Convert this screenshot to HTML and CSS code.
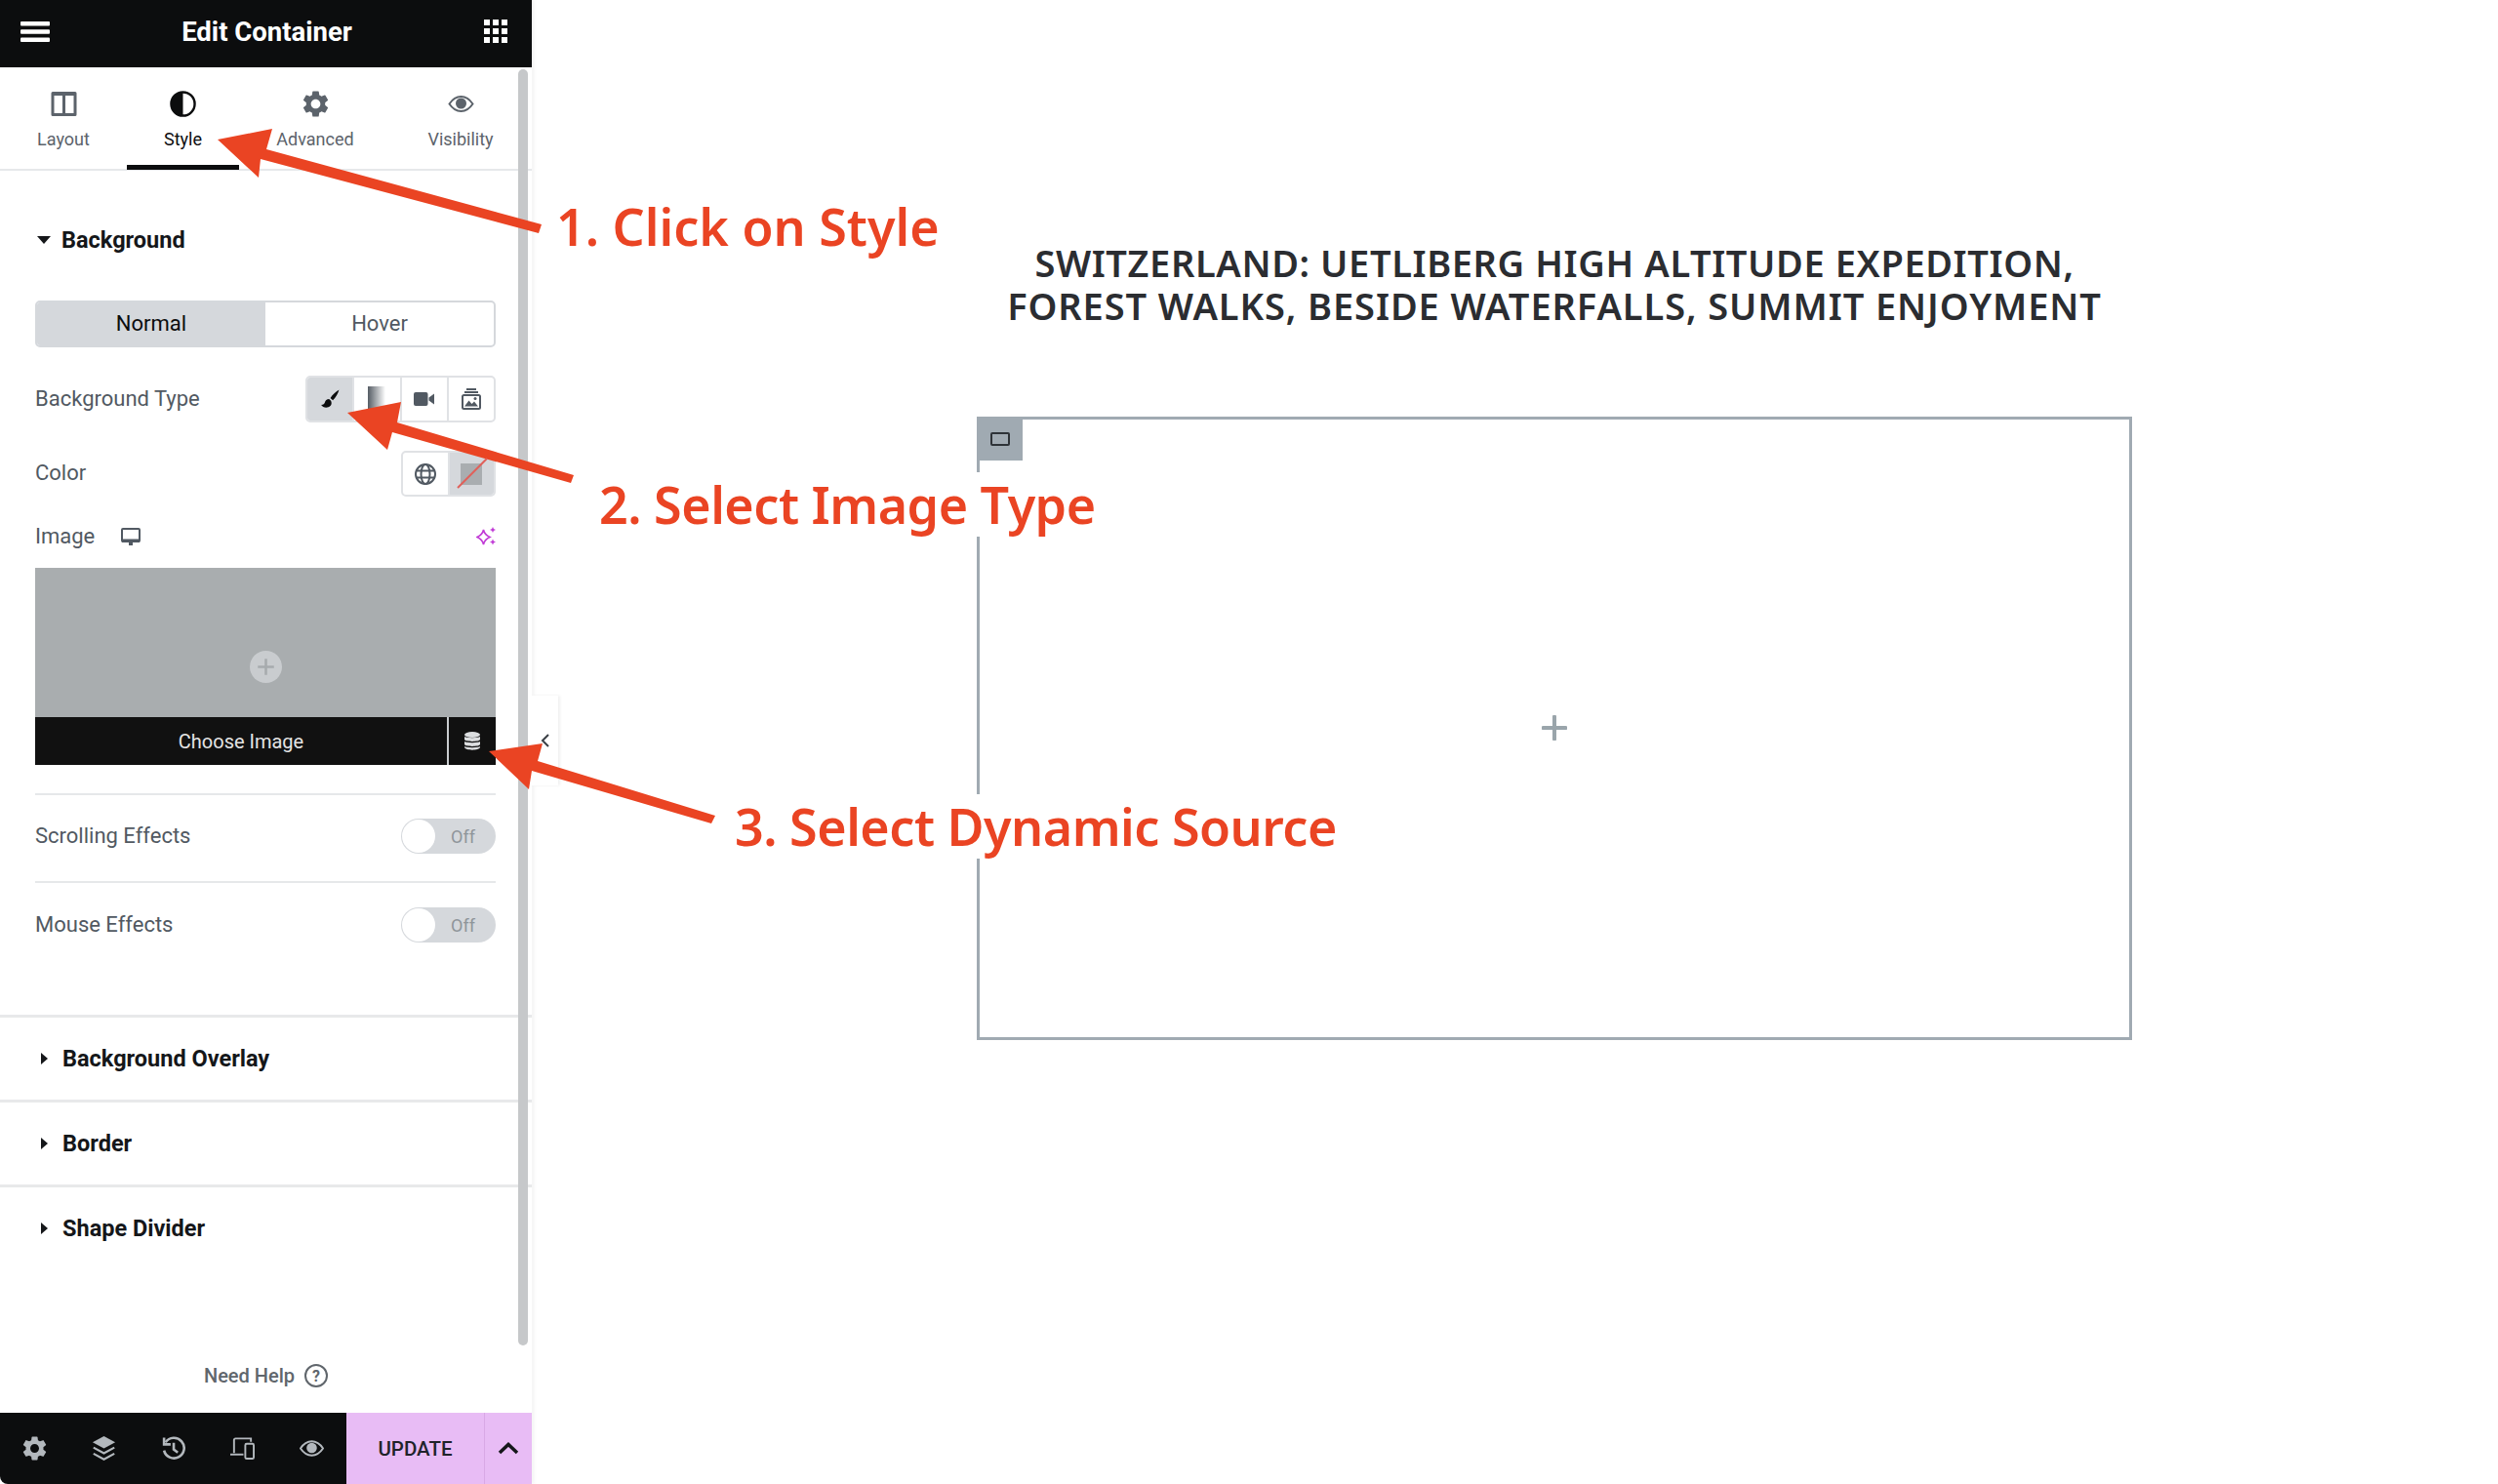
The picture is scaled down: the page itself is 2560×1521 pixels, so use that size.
FILE: index.html
```html
<!DOCTYPE html>
<html lang="en">
<head>
  <meta charset="UTF-8" />
  <title>Edit Container</title>
  <link rel="stylesheet" href="styles.css">
</head>
<body>
<div class="editor">

  <aside class="panel">
    <header class="panel-head">
      <svg class="icon-menu" viewBox="0 0 30 21"><rect width="30" height="4.500" rx="1"/><rect y="8.200" width="30" height="4.500" rx="1"/><rect y="16.500" width="30" height="4.500" rx="1"/></svg>
      <h2>Edit Container</h2>
      <svg class="icon-grid" viewBox="0 0 24 24"><path d="M0 0h6v6H0zM9 0h6v6H9zM18 0h6v6h-6zM0 9h6v6H0zM9 9h6v6H9zM18 9h6v6h-6zM0 18h6v6H0zM9 18h6v6H9zM18 18h6v6h-6z"/></svg>
    </header>

    <nav class="tabs">
      <a class="tab tab-layout">
        <svg viewBox="0 0 27 27"><path d="M2 1h23a1.500 1.500 0 0 1 1.500 1.500v22A1.500 1.500 0 0 1 25 26H2a1.500 1.500 0 0 1-1.500-1.500v-22A1.500 1.500 0 0 1 2 1zm1.500 4v18H12V5zm11.500 0v18h8.500V5z" fill-rule="evenodd"/></svg>
        <span>Layout</span>
      </a>
      <a class="tab tab-style active">
        <svg viewBox="0 0 28 28"><circle class="half-ring" cx="14" cy="14" r="12.500"/><path d="M14 1.500a12.500 12.500 0 0 0 0 25z"/></svg>
        <span>Style</span>
      </a>
      <a class="tab tab-advanced">
        <svg viewBox="2 2 20 20"><path d="M19.140 12.940c.04-.3.06-.61.06-.94 0-.32-.02-.64-.07-.94l2.030-1.580a.49.49 0 0 0 .12-.61l-1.920-3.320a.488.488 0 0 0-.59-.22l-2.390.96c-.5-.38-1.030-.7-1.620-.94l-.36-2.540a.484.484 0 0 0-.48-.41h-3.840c-.24 0-.43.17-.47.41l-.36 2.540c-.59.24-1.130.57-1.620.94l-2.390-.96c-.22-.08-.47 0-.59.22L2.740 8.870c-.12.21-.08.47.12.61l2.030 1.580c-.05.3-.09.63-.09.94s.02.64.07.94l-2.030 1.580a.49.49 0 0 0-.12.61l1.920 3.320c.12.22.37.29.59.22l2.390-.96c.5.38 1.030.7 1.620.94l.36 2.540c.05.24.24.41.48.41h3.840c.24 0 .44-.17.47-.41l.36-2.540c.59-.24 1.130-.56 1.620-.94l2.390.96c.22.08.47 0 .59-.22l1.920-3.320c.12-.22.07-.47-.12-.61l-2.010-1.580zM12 15.600c-1.980 0-3.600-1.620-3.600-3.600s1.620-3.600 3.600-3.600 3.600 1.620 3.600 3.600-1.620 3.600-3.600 3.600z"/></svg>
        <span>Advanced</span>
      </a>
      <a class="tab tab-visibility">
        <svg viewBox="0 0 26 17"><path class="line" d="M1 8.500C5 2.500 9 1 13 1s8 1.500 12 7.500C21 14.500 17 16 13 16S5 14.500 1 8.500z"/><circle cx="13" cy="8" r="5.500"/></svg>
        <span>Visibility</span>
      </a>
    </nav>

    <section class="section-open">
      <h3 class="section-title"><i class="caret-down"></i>Background</h3>
      <div class="section-body">
        <div class="state-switch">
          <span class="state active">Normal</span>
          <span class="state">Hover</span>
        </div>

        <div class="row row-type">
          <label>Background Type</label>
          <div class="btn-group">
            <span class="cell selected">
              <svg class="ico-brush" viewBox="0 0 18 18"><path d="M17.500.5c-2.500 1.200-6 4.500-8 7.500l2.300 2.200c2.500-2.500 5-6.500 5.700-9.700zM8.300 9C6.200 9 4.800 10.300 4.500 12c-.3 1.500-1.500 2.300-3.500 2.500 1.500 2.500 6 3.300 8.500.8 1.300-1.300 1.300-3.300.5-4.800z"/></svg>
            </span>
            <span class="cell"><i class="swatch-gradient"></i></span>
            <span class="cell">
              <svg class="ico-video" viewBox="0 0 21 14"><rect width="14.500" height="14" rx="2"/><path d="M15.500 5.500 21 1.500v11l-5.500-4z"/></svg>
            </span>
            <span class="cell">
              <svg class="ico-slides" viewBox="0 0 20 22"><path class="line" d="M5 1h10M3 4h14"/><rect class="line" x="1" y="7" width="18" height="14" rx="1.500"/><path d="M3 18.500l4.500-6 3 3.500 2.500-2.500 4 5z"/><circle cx="14" cy="10.500" r="1.500"/></svg>
            </span>
          </div>
        </div>

        <div class="row row-color">
          <label>Color</label>
          <div class="btn-group">
            <span class="cell">
              <svg class="ico-globe" viewBox="0 0 22 22"><circle class="line" cx="11" cy="11" r="10"/><ellipse class="line" cx="11" cy="11" rx="4.500" ry="10"/><path class="line" d="M1.500 7.500h19M1.500 14.500h19"/></svg>
            </span>
            <span class="cell selected"><i class="swatch-none"></i></span>
          </div>
        </div>

        <div class="row row-image">
          <label>Image</label>
          <svg class="ico-monitor" viewBox="0 0 20 18"><path class="line" d="M2 1h16a1 1 0 0 1 1 1v11a1 1 0 0 1-1 1H2a1 1 0 0 1-1-1V2a1 1 0 0 1 1-1z"/><path d="M1 11.500h18V15H1zM8 15h4v3H8z"/></svg>
          <svg class="ico-sparkle" viewBox="0 0 20 20"><path class="line-thin" d="M7.500 3c.8 4 2.500 5.700 6.500 7.500-4 1.800-5.700 3.500-6.500 7.500-.8-4-2.500-5.700-6.500-7.500 4-1.800 5.700-3.500 6.500-7.500z"/><path d="M17 0l.9 2.100 2.100.9-2.100.9-.9 2.100-.9-2.100-2.100-.9 2.100-.9zM17 12.500l.9 2.100 2.100.9-2.100.9-.9 2.100-.9-2.100-2.100-.9 2.100-.9z"/></svg>
        </div>

        <div class="media-box">
          <div class="media-preview">
            <svg class="ico-add" viewBox="0 0 32 32"><circle class="add-disc" cx="16" cy="16" r="16"/><path class="add-cross" d="M16 8v16M8 16h16"/></svg>
          </div>
          <div class="media-actions">
            <span class="media-choose">Choose Image</span>
            <span class="media-dynamic">
              <svg viewBox="0 0 16 19"><ellipse cx="8" cy="3" rx="8" ry="3"/><path d="M0 5c1.500 1.500 14.500 1.500 16 0v3c-1 2.500-15 2.500-16 0zM0 10c1.500 1.500 14.500 1.500 16 0v3c-1 2.500-15 2.500-16 0zM0 15c1.500 1.500 14.500 1.500 16 0v1c-1 3.500-15 3.500-16 0z"/></svg>
            </span>
          </div>
        </div>

        <div class="row row-toggle">
          <label>Scrolling Effects</label>
          <span class="toggle"><i></i>Off</span>
        </div>
        <div class="row row-toggle">
          <label>Mouse Effects</label>
          <span class="toggle"><i></i>Off</span>
        </div>
      </div>
    </section>

    <section class="section-closed"><h3 class="section-title"><i class="caret-right"></i>Background Overlay</h3></section>
    <section class="section-closed"><h3 class="section-title"><i class="caret-right"></i>Border</h3></section>
    <section class="section-closed"><h3 class="section-title"><i class="caret-right"></i>Shape Divider</h3></section>

    <div class="need-help">
      Need Help
      <svg viewBox="0 0 24 24"><circle class="line" cx="12" cy="12" r="11"/><text x="12" y="17.500" text-anchor="middle" class="help-mark">?</text></svg>
    </div>

    <footer class="panel-foot">
      <div class="foot-tools">
        <svg viewBox="2 2 20 20"><path d="M19.140 12.940c.04-.3.06-.61.06-.94 0-.32-.02-.64-.07-.94l2.030-1.580a.49.49 0 0 0 .12-.61l-1.920-3.320a.488.488 0 0 0-.59-.22l-2.390.96c-.5-.38-1.030-.7-1.620-.94l-.36-2.540a.484.484 0 0 0-.48-.41h-3.840c-.24 0-.43.17-.47.41l-.36 2.540c-.59.24-1.130.57-1.620.94l-2.390-.96c-.22-.08-.47 0-.59.22L2.740 8.870c-.12.21-.08.47.12.61l2.030 1.580c-.05.3-.09.63-.09.94s.02.64.07.94l-2.030 1.580a.49.49 0 0 0-.12.61l1.920 3.320c.12.22.37.29.59.22l2.390-.96c.5.38 1.030.7 1.620.94l.36 2.540c.05.24.24.41.48.41h3.840c.24 0 .44-.17.47-.41l.36-2.540c.59-.24 1.130-.56 1.620-.94l2.390.96c.22.08.47 0 .59-.22l1.920-3.320c.12-.22.07-.47-.12-.61l-2.010-1.580zM12 15.600c-1.980 0-3.600-1.620-3.600-3.600s1.620-3.600 3.600-3.600 3.600 1.620 3.600 3.600-1.620 3.600-3.600 3.600z"/></svg>
        <svg viewBox="0 0 26 28"><path d="M13 0l13 7-13 7L0 7z"/><path class="line-thick" d="M1 13l12 6.500L25 13M1 20l12 6.500L25 20"/></svg>
        <svg viewBox="0 0 24 24"><path class="line-thick" d="M4.500 6A10 10 0 1 1 3 14"/><path class="line-thick" d="M3 1.500V8h6.500"/><path class="line-thick" d="M12.500 6.500V13l4 3"/></svg>
        <svg viewBox="0 0 26 24"><path class="line" d="M4 17V3a1.500 1.500 0 0 1 1.500-1.500H22V5"/><path class="line" d="M0 18.500h14"/><rect class="line" x="16" y="7" width="9" height="16" rx="1.500"/></svg>
        <svg viewBox="0 0 26 17"><path class="line" d="M1 8.500C5 2.500 9 1 13 1s8 1.500 12 7.500C21 14.500 17 16 13 16S5 14.500 1 8.500z"/><circle cx="13" cy="8" r="5.500"/></svg>
      </div>
      <div class="foot-update">UPDATE</div>
      <div class="foot-more">
        <svg viewBox="0 0 22 13"><path class="chevron" d="M2 11l9-8.500 9 8.500"/></svg>
      </div>
    </footer>

    <div class="scrollbar"></div>
    <div class="collapse-tab"><svg viewBox="0 0 10 16"><path class="line" d="M8 2L2 8l6 6"/></svg></div>
  </aside>

  <main class="canvas">
    <h1><span class="title-top">SWITZERLAND: UETLIBERG HIGH ALTITUDE EXPEDITION,</span><br>FOREST WALKS, BESIDE WATERFALLS, SUMMIT ENJOYMENT</h1>
    <div class="container-box">
      <span class="container-tab"><i></i></span>
      <svg class="ico-plus" viewBox="0 0 26 26"><path class="plus-stroke" d="M13 1.500v23M1.500 13h23"/></svg>
    </div>
  </main>

  <!-- tutorial annotations painted over the screenshot -->
  <div class="note note-1">1. Click on Style</div>
  <div class="note note-2">2. Select Image Type</div>
  <div class="note note-3">3. Select Dynamic Source</div>
  <svg class="arrows" viewBox="0 0 2560 1521">
    <polygon points="223,143 279,132 273,153 555,230 552,239 267,163 265,182"/>
    <polygon points="356,423 411,412 407,433 588,487 585,495 402,443 397,461"/>
    <polygon points="501,770 556,762 551,780 733,836 729,844 545,790 542,809"/>
    <path class="slash" d="M469 500L499 470"/>
  </svg>
</div>
</body>
</html>
```

FILE: styles.css
```css
* {
  box-sizing: border-box;
}

body {
  margin: 0;
  background-color: #fff;
  font-family: Roboto, "Liberation Sans", sans-serif;
  color: #515962;
}

svg {
  display: block;
  fill: currentColor;
}

/* stroked parts of the icons */
.line,
.line-thin,
.line-thick,
.chevron {
  fill: none;
  stroke: currentColor;
  stroke-width: 2;
}

.line-thin {
  stroke-width: 1.600;
}

.line-thick {
  stroke-width: 2.500;
}

.chevron {
  stroke-width: 3.500;
}

.half-ring {
  fill: #fff;
  stroke: #0c0d0e;
  stroke-width: 2.500;
}

.add-disc {
  fill: #c9cccf;
}

.add-cross {
  fill: none;
  stroke: #a7abae;
  stroke-width: 2.500;
}

.plus-stroke {
  fill: none;
  stroke: currentColor;
  stroke-width: 4;
  stroke-linecap: round;
}

.editor {
  position: relative;
  display: flex;
  width: 2560px;
  height: 1521px;
  overflow: hidden;
}

/* side panel */
.panel {
  position: relative;
  display: flex;
  flex-direction: column;
  width: 545px;
  height: 1521px;
  flex-shrink: 0;
  box-shadow: 3px 0 3px #f6f6f6;
}

.panel-head {
  display: flex;
  align-items: center;
  justify-content: space-between;
  height: 69px;
  padding: 0 25px 5px 21px;
  background-color: #0c0d0e;
  color: #fff;
}

.panel-head h2 {
  margin: 0;
  font-size: 27.500px;
  font-weight: 700;
}

.icon-menu {
  width: 30px;
  height: 21px;
}

.icon-grid {
  width: 24px;
  height: 24px;
}

.tabs {
  position: relative;
  height: 106px;
  border-bottom: 2px solid #e6e8ea;
}

.tab {
  position: absolute;
  top: 0;
  display: flex;
  flex-direction: column;
  align-items: center;
  width: 116px;
  height: 105px;
  padding-top: 24px;
  font-size: 18px;
  color: #5c636b;
}

.tab svg {
  height: 27px;
  width: 27px;
}

.tab span {
  margin-top: 12px;
}

.tab-layout { left: 7px; }
.tab-style { left: 130px; width: 115px; }
.tab-advanced { left: 265px; }
.tab-visibility { left: 414px; }

.tab-style {
  border-bottom: 5px solid #0c0d0e;
  color: #0c0d0e;
}

.tab-visibility svg {
  height: 17px;
  margin: 5px 0;
}

.section-title {
  display: flex;
  align-items: center;
  margin: 0;
  padding-left: 42px;
  font-size: 23.500px;
  font-weight: 700;
  color: #15171a;
}

.section-open .section-title {
  height: 86px;
  margin-top: 28px;
  padding-left: 38px;
}

.caret-down {
  width: 0;
  height: 0;
  margin-right: 11px;
  border-left: 7px solid transparent;
  border-right: 7px solid transparent;
  border-top: 8px solid #15171a;
}

.caret-right {
  width: 0;
  height: 0;
  margin-right: 15px;
  border-top: 6px solid transparent;
  border-bottom: 6px solid transparent;
  border-left: 7px solid #15171a;
}

.section-body {
  padding: 19px 37px 0 36px;
}

.state-switch {
  display: flex;
  height: 48px;
  border: 2px solid #d5d8dc;
  border-radius: 5px;
  overflow: hidden;
  font-size: 22px;
}

.state {
  flex: 1;
  display: flex;
  align-items: center;
  justify-content: center;
  padding-bottom: 2px;
}

.state.active {
  background-color: #d5d8dc;
  color: #0c0d0e;
}

.row {
  display: flex;
  align-items: center;
  justify-content: space-between;
  font-size: 22px;
}

.row label {
  margin-top: -2px;
}

.row-type {
  margin-top: 29px;
}

.row-color {
  margin-top: 29px;
}

.btn-group {
  display: flex;
  height: 48px;
  border: 2px solid #e0e2e5;
  border-radius: 5px;
  overflow: hidden;
}

.row-type .btn-group {
  width: 195px;
}

.row-color .btn-group {
  width: 97px;
  height: 47px;
}

.cell {
  flex: 1;
  display: flex;
  align-items: center;
  justify-content: center;
  border-left: 2px solid #e0e2e5;
}

.cell:first-child {
  border-left: 0;
}

.cell.selected {
  background-color: #d5d8dc;
}

.ico-brush {
  width: 20px;
  height: 20px;
  color: #0c0d0e;
}

.swatch-gradient {
  width: 18px;
  height: 26px;
  background: linear-gradient(to right, #555c64, #fff);
}

.ico-video {
  width: 21px;
  height: 14px;
}

.ico-slides {
  width: 20px;
  height: 22px;
}

.ico-globe {
  width: 22px;
  height: 22px;
}

.swatch-none {
  width: 22px;
  height: 22px;
  background-color: #a9adb0;
}

.row-image {
  height: 34px;
  margin-top: 24px;
  justify-content: flex-start;
}

.ico-monitor {
  width: 20px;
  height: 18px;
  margin-left: 27px;
}

.ico-sparkle {
  width: 20px;
  height: 20px;
  margin-left: auto;
  color: #c13bd6;
}

.media-box {
  margin-top: 15px;
  height: 202px;
  margin-bottom: 29px;
}

.media-preview {
  display: flex;
  align-items: center;
  justify-content: center;
  height: 153px;
  padding-top: 50px;
  background-color: #a9adaf;
}

.ico-add {
  width: 33px;
  height: 33px;
}

.media-actions {
  display: flex;
  height: 49px;
  background-color: #111;
  color: #e4e4e4;
  font-size: 20px;
}

.media-choose {
  flex: 1;
  display: flex;
  align-items: center;
  justify-content: center;
}

.media-dynamic {
  display: flex;
  align-items: center;
  justify-content: center;
  width: 50px;
  border-left: 2px solid #c9cccf;
}

.media-dynamic svg {
  width: 16px;
  height: 19px;
  color: #dcdee0;
}

.row-toggle {
  padding: 24px 0 28px;
  border-top: 2px solid #e6e8ea;
}

.row-toggle + .row-toggle {
  padding: 25px 0 74px;
}

.toggle {
  position: relative;
  display: flex;
  align-items: center;
  justify-content: flex-end;
  width: 97px;
  height: 36px;
  padding-right: 21px;
  border-radius: 18px;
  background-color: #d5d8dc;
  color: #8f959a;
  font-size: 18px;
}

.toggle i {
  position: absolute;
  left: 1px;
  top: 1px;
  width: 34px;
  height: 34px;
  border-radius: 50%;
  background-color: #fff;
}

.section-closed {
  height: 87px;
  border-top: 3px solid #e8e9ea;
}

.section-closed .section-title {
  height: 83px;
}

.need-help {
  display: flex;
  align-items: center;
  justify-content: center;
  gap: 10px;
  height: 38px;
  margin-top: auto;
  margin-bottom: 19px;
  font-size: 20px;
  font-weight: 500;
  color: #60666c;
}

.need-help svg {
  width: 24px;
  height: 24px;
}

.help-mark {
  font-size: 16px;
  font-weight: 700;
  fill: #60666c;
}

.panel-foot {
  display: flex;
  height: 73px;
  flex-shrink: 0;
}

.foot-tools {
  display: flex;
  align-items: center;
  gap: 46px;
  width: 355px;
  padding-left: 23px;
  background-color: #0c0d0e;
  border-bottom-left-radius: 8px;
  color: #b3b8bd;
}

.foot-tools svg {
  width: 25px;
  height: 25px;
}

.foot-update {
  display: flex;
  align-items: center;
  justify-content: center;
  width: 141px;
  background-color: #e8bcf5;
  color: #20232a;
  font-size: 20.500px;
  font-weight: 500;
}

.foot-more {
  display: flex;
  align-items: center;
  justify-content: center;
  width: 49px;
  background-color: #e8bcf5;
  border-left: 1px solid #d9a8e6;
  color: #15171a;
}

.foot-more svg {
  width: 22px;
  height: 13px;
}

.scrollbar {
  position: absolute;
  left: 531px;
  top: 71px;
  width: 10px;
  height: 1308px;
  border-radius: 5px;
  background-color: #c6c8ca;
}

.collapse-tab {
  position: absolute;
  left: 545px;
  top: 713px;
  display: flex;
  align-items: center;
  justify-content: center;
  width: 27px;
  height: 92px;
  background-color: #fff;
  box-shadow: 2px 0 3px #f0f0f0;
  color: #3a3f45;
}

.collapse-tab svg {
  width: 10px;
  height: 16px;
}

/* canvas */
.canvas {
  flex: 1;
  padding: 247px 375px 0 456px;
}

.canvas h1 {
  margin: 0 -40px;
  text-align: center;
  font-family: "Noto Sans", sans-serif;
  font-size: 38px;
  font-weight: 600;
  letter-spacing: 0.900px;
  line-height: 44px;
  color: #2b2d31;
}

.title-top {
  letter-spacing: 0.600px;
}

.container-box {
  position: relative;
  display: flex;
  align-items: center;
  justify-content: center;
  height: 639px;
  margin-top: 92px;
  padding-bottom: 2px;
  border: 3px solid #a0aab2;
}

.container-tab {
  position: absolute;
  left: -3px;
  top: -3px;
  display: flex;
  align-items: center;
  justify-content: center;
  width: 47px;
  height: 45px;
  background-color: #a0aab2;
}

.container-tab i {
  width: 20px;
  height: 14px;
  border: 2px solid #2e3338;
  border-radius: 2px;
}

.ico-plus {
  width: 26px;
  height: 26px;
  color: #9aa5ab;
}

/* annotations */
.note {
  position: absolute;
  padding: 0 6px;
  background-color: #fff;
  font-family: "Noto Sans", sans-serif;
  font-size: 52px;
  font-weight: 600;
  line-height: 66px;
  color: #ea4423;
  white-space: nowrap;
}

.note-1 { left: 564px; top: 199px; }
.note-2 { left: 608px; top: 484px; letter-spacing: -0.500px; }
.note-3 { left: 747px; top: 814px; letter-spacing: -0.500px; }

.arrows {
  position: absolute;
  left: 0;
  top: 0;
  width: 2560px;
  height: 1521px;
  pointer-events: none;
  fill: #ea4423;
}

.slash {
  fill: none;
  stroke: #e0605a;
  stroke-width: 2;
}
```
